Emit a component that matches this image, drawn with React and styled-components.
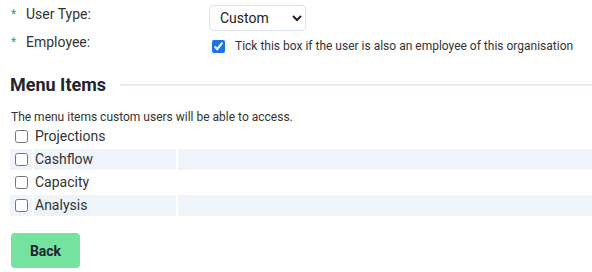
import React from "react";
import styled, { createGlobalStyle } from "styled-components";

const GlobalStyle = createGlobalStyle`
  body {
    margin: 0;
    font-family: Roboto, "Liberation Sans", sans-serif;
    color: #333333;
    background: #ffffff;
  }
`;

const menuItems = ["Projections", "Cashflow", "Capacity", "Analysis"];

export default function App() {
  return (
    <>
      <GlobalStyle />
      <Page>
        <FormRow>
          <Label>
            <Star>*</Star>User Type:
          </Label>
          <Value>
            <Select defaultValue="custom">
              <option value="custom">Custom</option>
              <option value="admin">Admin</option>
            </Select>
          </Value>
        </FormRow>
        <FormRow>
          <Label>
            <Star>*</Star>Employee:
          </Label>
          <Value>
            <CheckLabel>
              <Check type="checkbox" defaultChecked />
              Tick this box if the user is also an employee of this organisation
            </CheckLabel>
          </Value>
        </FormRow>

        <Heading>
          <span>Menu Items</span>
          <Rule />
        </Heading>
        <Description>
          The menu items custom users will be able to access.
        </Description>

        <Table>
          <tbody>
            {menuItems.map((item, i) => (
              <Row key={item} $striped={i % 2 === 1}>
                <BoxCell>
                  <Check type="checkbox" />
                </BoxCell>
                <NameCell>{item}</NameCell>
                <FillCell />
              </Row>
            ))}
          </tbody>
        </Table>

        <BackButton>Back</BackButton>
      </Page>
    </>
  );
}

//#region style

const Page = styled.div`
  padding: 5px 0 0 10px;
  width: 592px;
  box-sizing: border-box;
`;

const FormRow = styled.div`
  display: grid;
  grid-template-columns: 199px 1fr;
  align-items: center;
  min-height: 26px;
  margin-bottom: 2px;
`;

const Label = styled.div`
  display: flex;
  align-items: center;
  font-size: 14px;
  color: #333333;
  align-self: start;
  padding-top: 1px;
`;

const Star = styled.span`
  color: #3aa55d;
  font-size: 12px;
  width: 15px;
  padding-left: 1px;
`;

const Value = styled.div`
  display: flex;
  align-items: center;
`;

const Select = styled.select`
  width: 97px;
  height: 26px;
  border: 1px solid #dbe3ee;
  border-radius: 4px;
  background: #ffffff;
  font-family: Roboto, "Liberation Sans", sans-serif;
  font-size: 14px;
  color: #222222;
  padding: 0 6px;
`;

const CheckLabel = styled.label`
  display: flex;
  align-items: center;
  gap: 10px;
  font-size: 12px;
  color: #333333;
  padding-left: 3px;
`;

const Check = styled.input`
  width: 13px;
  height: 13px;
  margin: 0;
  accent-color: #1a73e8;
`;

const Heading = styled.h2`
  display: flex;
  align-items: center;
  gap: 14px;
  margin: 15px 0 0;
  font-size: 18px;
  font-weight: 700;
  color: #1f2430;
`;

const Rule = styled.div`
  flex: 1;
  height: 2px;
  background: #e6edf6;
`;

const Description = styled.p`
  margin: 15px 0 0 1px;
  font-size: 12px;
  color: #333333;
`;

const Table = styled.table`
  border-spacing: 2px;
  margin: 0 0 0 -2px;
  width: 586px;
`;

const Row = styled.tr`
  height: 21px;
  background: ${(p) => (p.$striped ? "#eff4fb" : "transparent")};
`;

const BoxCell = styled.td`
  width: 17px;
  padding: 0 0 0 5px;
  vertical-align: middle;
  line-height: 0;
`;

const NameCell = styled.td`
  width: 141px;
  padding: 0 0 0 1px;
  font-size: 14px;
  line-height: 17px;
  color: #333333;
`;

const FillCell = styled.td`
  padding: 0;
`;

const BackButton = styled.button`
  display: block;
  margin: 15px 0 0 1px;
  width: 69px;
  height: 35px;
  border: none;
  border-radius: 4px;
  background: #75e3a0;
  font-family: Roboto, "Liberation Sans", sans-serif;
  font-size: 14px;
  font-weight: 700;
  color: #1f2430;
`;

//#endregion
